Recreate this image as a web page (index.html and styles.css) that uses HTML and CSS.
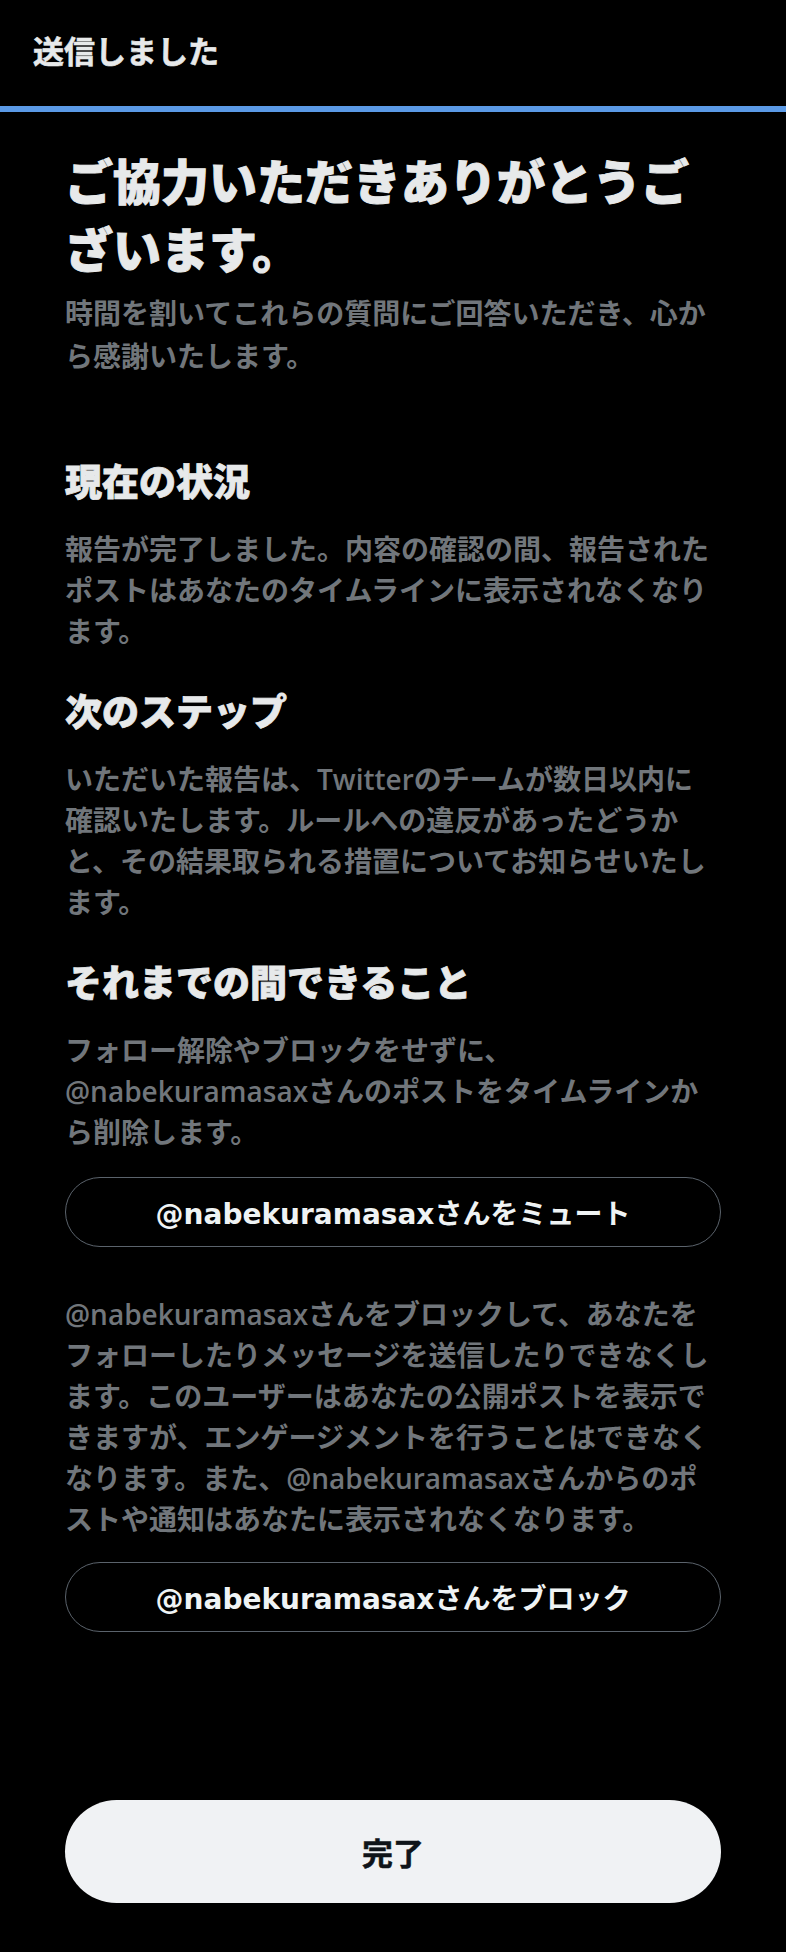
FILE: index.html
```html
<!DOCTYPE html>
<html lang="ja">
<head>
  <meta charset="UTF-8">
  <title>送信しました</title>
  <meta name="viewport" content="width=device-width, initial-scale=1.0">
  <link rel="stylesheet" href="styles.css">
</head>
<body>

  <header class="topbar">
    <h2 class="topbar-title">送信しました</h2>
  </header>
  <div class="progress"></div>

  <main class="content">
    <div class="intro">
      <h1>ご協力いただきありがとうございます。</h1>
      <p class="lead">時間を割いてこれらの質問にご回答いただき、心から感謝いたします。</p>
    </div>

    <section class="section">
      <h3>現在の状況</h3>
      <p>報告が完了しました。内容の確認の間、報告されたポストはあなたのタイムラインに表示されなくなります。</p>
    </section>

    <section class="section">
      <h3>次のステップ</h3>
      <p>いただいた報告は、Twitterのチームが数日以内に<span class="nw">確認</span>いたします。ルールへの違反があったどうかと、その結果取られる措置についてお知らせいたします。</p>
    </section>

    <section class="section">
      <h3>それまでの間できること</h3>
      <p>フォロー解除やブロックをせずに、@nabekuramasaxさんのポストをタイムラインから削除します。</p>
      <button class="outline-btn" type="button">@nabekuramasaxさんをミュート</button>

      <p class="block-desc">@nabekuramasaxさんをブロックして、あなたをフォローしたりメッセージを送信したりできなくします。このユーザーはあなたの公開ポストを表示できますが、エンゲージメントを行うことはできなくなります。また、@nabekuramasaxさんからのポストや通知はあなたに表示されなくなります。</p>
      <button class="outline-btn" type="button">@nabekuramasaxさんをブロック</button>
    </section>
  </main>

  <footer class="footer">
    <button class="done-btn" type="button">完了</button>
  </footer>

</body>
</html>
```

FILE: styles.css
```css
* {
  box-sizing: border-box;
}

body {
  margin: 0;
  background: #000;
  color: #e7e9ea;
  font-family: "Open Sans", "Noto Sans CJK JP", sans-serif;
  min-height: 100vh;
  display: flex;
  flex-direction: column;
}

.nw {
  white-space: nowrap;
}

.topbar {
  height: 106px;
  display: flex;
  align-items: center;
  padding: 0 33px 4px;
}

.topbar-title {
  margin: 0;
  font-size: 31px;
  line-height: 44px;
  font-weight: 700;
  color: #e7e9ea;
  -webkit-text-stroke: 0.6px #e7e9ea;
}

.progress {
  height: 6px;
  background: #5b9ae6;
}

.content {
  padding: 36px 65px 0;
}

h1 {
  margin: 0;
  font-size: 48px;
  line-height: 68px;
  font-weight: 900;
  color: #e7e9ea;
  -webkit-text-stroke: 1px #e7e9ea;
}

.lead {
  margin: 8px 0 0;
  font-size: 28px;
  line-height: 43px;
  font-weight: 600;
  color: #71767b;
}

/* collapses with the first section's top margin */
.intro {
  margin-bottom: 77px;
}

.section {
  margin-top: 33px;
}

.section h3 {
  margin: 0 0 20px;
  font-size: 37px;
  line-height: 54px;
  font-weight: 900;
  color: #e7e9ea;
  -webkit-text-stroke: 0.8px #e7e9ea;
}

.section p {
  margin: 0;
  font-size: 28px;
  line-height: 41px;
  font-weight: 600;
  color: #71767b;
}

.section .block-desc {
  margin-top: 47px;
}

.outline-btn {
  display: block;
  width: 100%;
  height: 70px;
  margin-top: 24px;
  background: transparent;
  border: 1px solid #5b636c;
  border-radius: 999px;
  color: #eff3f4;
  font-family: "DejaVu Sans", "Noto Sans CJK JP", sans-serif;
  font-size: 28px;
  font-weight: 700;
  cursor: pointer;
}

.block-desc + .outline-btn {
  margin-top: 22px;
}

.footer {
  margin-top: auto;
  padding: 0 65px 49px;
}

.done-btn {
  display: block;
  width: 100%;
  height: 103px;
  background: #f0f2f4;
  border: none;
  border-radius: 999px;
  color: #0f1419;
  font-family: inherit;
  font-size: 31px;
  font-weight: 700;
  -webkit-text-stroke: 0.5px #0f1419;
  cursor: pointer;
}
```
